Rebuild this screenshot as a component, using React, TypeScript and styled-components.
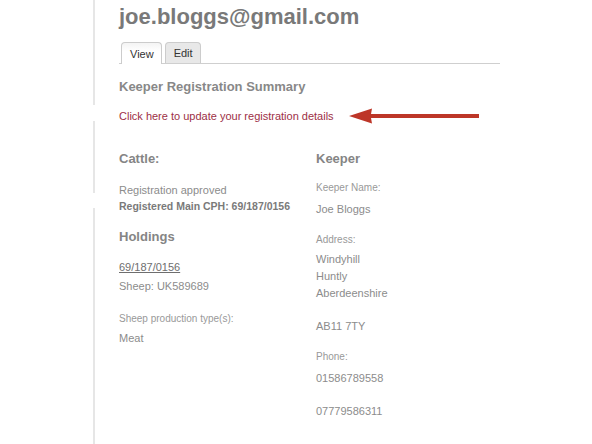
import React from "react";
import styled, { createGlobalStyle } from "styled-components";

const GlobalStyle = createGlobalStyle`
  body {
    margin: 0;
    background: #ffffff;
    font-family: "Liberation Sans", Arial, sans-serif;
  }
`;

const Page = styled.div`
  width: 592px;
  height: 444px;
  overflow: hidden;
  background: #ffffff;
`;

const Content = styled.div`
  margin-left: 93px;
  width: 407px;
  min-height: 444px;
  padding: 4px 0 0 26px;
  box-sizing: border-box;
  background-image: linear-gradient(
    to bottom,
    #e6e6e6 0,
    #e6e6e6 105px,
    transparent 105px,
    transparent 121px,
    #e6e6e6 121px,
    #e6e6e6 193px,
    transparent 193px,
    transparent 208px,
    #e6e6e6 208px
  );
  background-size: 2px 100%;
  background-repeat: no-repeat;
`;

const Title = styled.h1`
  margin: 0;
  font-size: 22px;
  line-height: 26px;
  font-weight: bold;
  color: #797979;
`;

const TabBar = styled.div`
  display: flex;
  gap: 3px;
  margin-top: 12px;
  padding-left: 2px;
  border-bottom: 1px solid #cfcfcf;
`;

const Tab = styled.div<{ active?: boolean }>`
  padding: 0 7px 0 8px;
  display: flex;
  align-items: center;
  font-size: 11px;
  color: #333333;
  border: 1px solid #cccccc;
  border-bottom: none;
  border-radius: 4px 4px 0 0;
  background: ${(p) =>
    p.active ? "linear-gradient(#f4f4f4, #ffffff 40%)" : "#e8e8e8"};
  margin-bottom: ${(p) => (p.active ? "-1px" : "0")};
  height: ${(p) => (p.active ? "22px" : "21px")};
  box-sizing: border-box;
`;

const Summary = styled.h2`
  margin: 15px 0 0;
  font-size: 13px;
  line-height: 16px;
  font-weight: bold;
  color: #888888;
`;

const LinkRow = styled.div`
  display: flex;
  align-items: center;
  height: 18px;
  margin-top: 12px;
  gap: 15px;
`;

const UpdateLink = styled.a`
  font-size: 11px;
  line-height: 14px;
  color: #9d2f46;
  text-decoration: none;
`;

const Columns = styled.div`
  display: grid;
  grid-template-columns: 197px 1fr;
  margin-top: 26px;
`;

const Column = styled.div`
  display: flex;
  flex-direction: column;
`;

const Heading = styled.h3<{ gap?: number }>`
  margin: ${(p) => p.gap ?? 0}px 0 0;
  font-size: 13px;
  line-height: 16px;
  font-weight: bold;
  color: #858585;
`;

const Label = styled.div<{ gap?: number }>`
  margin-top: ${(p) => p.gap ?? 0}px;
  font-size: 10px;
  line-height: 14px;
  color: #999999;
`;

const Value = styled.div<{ gap?: number; strong?: boolean; lh?: number }>`
  margin-top: ${(p) => p.gap ?? 0}px;
  font-size: ${(p) => (p.strong ? "10.5px" : "11px")};
  line-height: ${(p) => p.lh ?? 16}px;
  color: ${(p) => (p.strong ? "#7a7a7a" : "#8c8c8c")};
  font-weight: ${(p) => (p.strong ? "bold" : "normal")};
`;

const HoldingLink = styled.a`
  margin-top: 14px;
  font-size: 11px;
  line-height: 16px;
  color: #6e6e6e;
  text-decoration: underline;
`;

function Arrow() {
  return (
    <svg width="131" height="18" viewBox="0 0 131 18">
      <path d="M0 9 L23 1.5 L22 7 L130 7 L130 11 L22 11 L23 16.5 Z" fill="#bd3628" />
    </svg>
  );
}

export default function App() {
  return (
    <Page>
      <GlobalStyle />
      <Content>
        <Title>joe.bloggs@gmail.com</Title>
        <TabBar>
          <Tab active>View</Tab>
          <Tab>Edit</Tab>
        </TabBar>
        <Summary>Keeper Registration Summary</Summary>
        <LinkRow>
          <UpdateLink href="#">Click here to update your registration details</UpdateLink>
          <Arrow />
        </LinkRow>
        <Columns>
          <Column>
            <Heading>Cattle:</Heading>
            <Value gap={15}>Registration approved</Value>
            <Value strong>Registered Main CPH: 69/187/0156</Value>
            <Heading gap={15}>Holdings</Heading>
            <HoldingLink href="#">69/187/0156</HoldingLink>
            <Value gap={3}>Sheep: UK589689</Value>
            <Label gap={18}>Sheep production type(s):</Label>
            <Value gap={4}>Meat</Value>
          </Column>
          <Column>
            <Heading>Keeper</Heading>
            <Label gap={14}>Keeper Name:</Label>
            <Value gap={6}>Joe Bloggs</Value>
            <Label gap={16}>Address:</Label>
            <Value gap={4} lh={17}>Windyhill</Value>
            <Value lh={17}>Huntly</Value>
            <Value lh={17}>Aberdeenshire</Value>
            <Value gap={16}>AB11 7TY</Value>
            <Label gap={16}>Phone:</Label>
            <Value gap={6}>01586789558</Value>
            <Value gap={17}>07779586311</Value>
          </Column>
        </Columns>
      </Content>
    </Page>
  );
}
